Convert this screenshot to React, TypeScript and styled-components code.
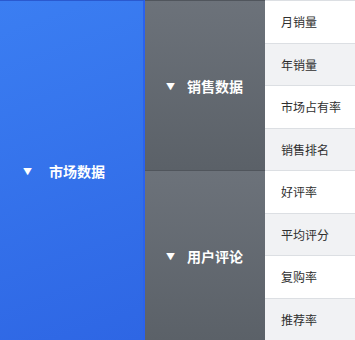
import React from "react";
import styled, { createGlobalStyle } from "styled-components";

const Global = createGlobalStyle`
  html, body { margin: 0; padding: 0; }
  body { font-family: "Noto Sans CJK SC", "Noto Sans", sans-serif; background: #fff; }
`;

const Table = styled.div`
  display: flex;
  width: 355px;
  height: 340px;
  overflow: hidden;
`;

const Level1 = styled.div`
  width: 145px;
  flex: none;
  display: flex;
  align-items: center;
  padding-left: 23px;
  box-sizing: border-box;
  background: linear-gradient(160deg, #3b7ef2 0%, #2e66e4 100%);
  border-top: 1px solid #2a59cf;
  border-right: 2px solid #2a62ee;
  color: #fff;
`;

const Level2Col = styled.div`
  width: 120px;
  flex: none;
  display: flex;
  flex-direction: column;
`;

const Level2 = styled.div`
  flex: 1;
  display: flex;
  align-items: center;
  padding-left: 21px;
  background: linear-gradient(180deg, #6c727a 0%, #5b6168 100%);
  border-top: 1px solid #50555c;
  color: #fff;
`;

const Arrow = styled.span<{ $gap: number }>`
  font-size: 9px;
  line-height: 1;
  margin-right: ${(p) => p.$gap}px;
  transform: translateY(1px);
`;

const Label = styled.span`
  font-size: 14px;
  font-weight: 700;
`;

const List = styled.div`
  flex: 1;
  display: flex;
  flex-direction: column;
  box-shadow: inset 6px 0 6px -4px rgba(0, 0, 0, 0.12);
`;

const Item = styled.div<{ $alt: boolean }>`
  flex: 1;
  display: flex;
  align-items: center;
  padding-left: 16px;
  font-size: 12px;
  color: #2f2f2f;
  background: ${(p) => (p.$alt ? "#f1f2f4" : "#fff")};
  border-top: 1px solid #dcdfe3;
`;

const groups = [
  { name: "销售数据", items: ["月销量", "年销量", "市场占有率", "销售排名"] },
  { name: "用户评论", items: ["好评率", "平均评分", "复购率", "推荐率"] },
];

export default function App() {
  const all = groups.flatMap((g) => g.items);
  return (
    <>
      <Global />
      <Table>
        <Level1>
          <Arrow $gap={17}>▼</Arrow>
          <Label>市场数据</Label>
        </Level1>
        <Level2Col>
          {groups.map((g) => (
            <Level2 key={g.name}>
              <Arrow $gap={12}>▼</Arrow>
              <Label>{g.name}</Label>
            </Level2>
          ))}
        </Level2Col>
        <List>
          {all.map((t, i) => (
            <Item key={t} $alt={i % 2 === 1}>
              {t}
            </Item>
          ))}
        </List>
      </Table>
    </>
  );
}
